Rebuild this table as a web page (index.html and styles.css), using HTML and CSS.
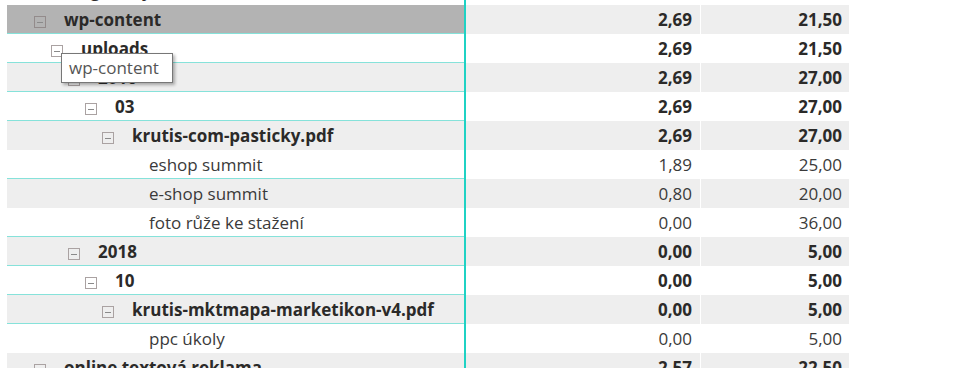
FILE: index.html
```html
<!DOCTYPE html>
<html lang="cs">
<head>
<meta charset="utf-8">
<title>Tabulka</title>
<link rel="stylesheet" href="styles.css">
</head>
<body>
<div class="view">
  <div class="table">
    <div class="row"><div class="c name lv0 b"><span class="box"></span>blog-entry</div><div class="c num b">2,69</div><div class="c num b">21,50</div></div>
    <div class="row sel ln"><div class="c name lv0 b"><span class="box"></span>wp-content</div><div class="c num b">2,69</div><div class="c num b">21,50</div></div>
    <div class="row ln"><div class="c name lv1 b"><span class="box"></span>uploads</div><div class="c num b">2,69</div><div class="c num b">21,50</div></div>
    <div class="row gray ln"><div class="c name lv2 b"><span class="box"></span>2016</div><div class="c num b">2,69</div><div class="c num b">27,00</div></div>
    <div class="row ln"><div class="c name lv3 b"><span class="box"></span>03</div><div class="c num b">2,69</div><div class="c num b">27,00</div></div>
    <div class="row gray"><div class="c name lv4 b"><span class="box"></span>krutis-com-pasticky.pdf</div><div class="c num b">2,69</div><div class="c num b">27,00</div></div>
    <div class="row ln"><div class="c name lv5"><span class="box none"></span>eshop summit</div><div class="c num">1,89</div><div class="c num">25,00</div></div>
    <div class="row gray"><div class="c name lv5"><span class="box none"></span>e-shop summit</div><div class="c num">0,80</div><div class="c num">20,00</div></div>
    <div class="row ln"><div class="c name lv5"><span class="box none"></span>foto růže ke stažení</div><div class="c num">0,00</div><div class="c num">36,00</div></div>
    <div class="row gray ln"><div class="c name lv2 b"><span class="box"></span>2018</div><div class="c num b">0,00</div><div class="c num b">5,00</div></div>
    <div class="row ln"><div class="c name lv3 b"><span class="box"></span>10</div><div class="c num b">0,00</div><div class="c num b">5,00</div></div>
    <div class="row gray ln"><div class="c name lv4 b"><span class="box"></span>krutis-mktmapa-marketikon-v4.pdf</div><div class="c num b">0,00</div><div class="c num b">5,00</div></div>
    <div class="row"><div class="c name lv5"><span class="box none"></span>ppc úkoly</div><div class="c num">0,00</div><div class="c num">5,00</div></div>
    <div class="row gray"><div class="c name lv0 b"><span class="box"></span>online textová reklama</div><div class="c num b">2,57</div><div class="c num b">22,50</div></div>
  </div>
  <div class="tip">wp-content</div>
</div>
</body>
</html>
```
FILE: styles.css
```css
html, body {
  margin: 0;
  padding: 0;
  background: #ffffff;
}
.view {
  position: relative;
  width: 978px;
  height: 368px;
  overflow: hidden;
  font-family: "Open Sans", "Noto Sans", "DejaVu Sans", sans-serif;
  font-size: 17px;
  color: #3a3a3a;
}
.table {
  margin-top: -24px;
  padding-left: 7px;
  display: flex;
  flex-direction: column;
}
.row {
  display: grid;
  grid-template-columns: 459px 234px 1px 148px;
  height: 29px;
}
.c {
  display: flex;
  align-items: center;
  white-space: nowrap;
}
.name {
  border-right: 2px solid #1fd2c4;
}
.num {
  justify-content: flex-end;
  padding-right: 8px;
}
.num + .num {
  grid-column: 4;
  padding-right: 7px;
}
.gray .c.num {
  background: #eeeeee;
}
.gray .name {
  background-color: #eeeeee;
}
.sel .name {
  background-color: #b3b3b3;
}
.sel .c.num {
  background: #eeeeee;
}
.ln .name {
  box-shadow: inset 0 -1px 0 #86e2da;
}
.b {
  font-weight: 700;
  color: #2b2a29;
}
.box {
  width: 12px;
  height: 12px;
  border: 1px solid #aaa2a2;
  box-sizing: border-box;
  margin-right: 18px;
  position: relative;
  flex: none;
  margin-top: 5px;
}
.box::after {
  content: "";
  position: absolute;
  left: 2px;
  right: 2px;
  top: 5px;
  height: 1px;
  background: #8a8a8a;
}
.sel .box {
  border-color: #938b8b;
}
.box.none {
  border-color: transparent;
}
.box.none::after {
  display: none;
}
.lv0 { padding-left: 27px; }
.lv1 { padding-left: 44px; }
.lv2 { padding-left: 61px; }
.lv3 { padding-left: 78px; }
.lv4 { padding-left: 95px; }
.lv5 { padding-left: 112px; }
.tip {
  position: absolute;
  left: 61px;
  top: 53px;
  width: 112px;
  height: 30px;
  box-sizing: border-box;
  background: #ffffff;
  border: 1px solid #777777;
  box-shadow: 2px 2px 3px rgba(0, 0, 0, 0.3);
  padding: 2px 0 0 7px;
  color: #555555;
  font-weight: 400;
}
```
